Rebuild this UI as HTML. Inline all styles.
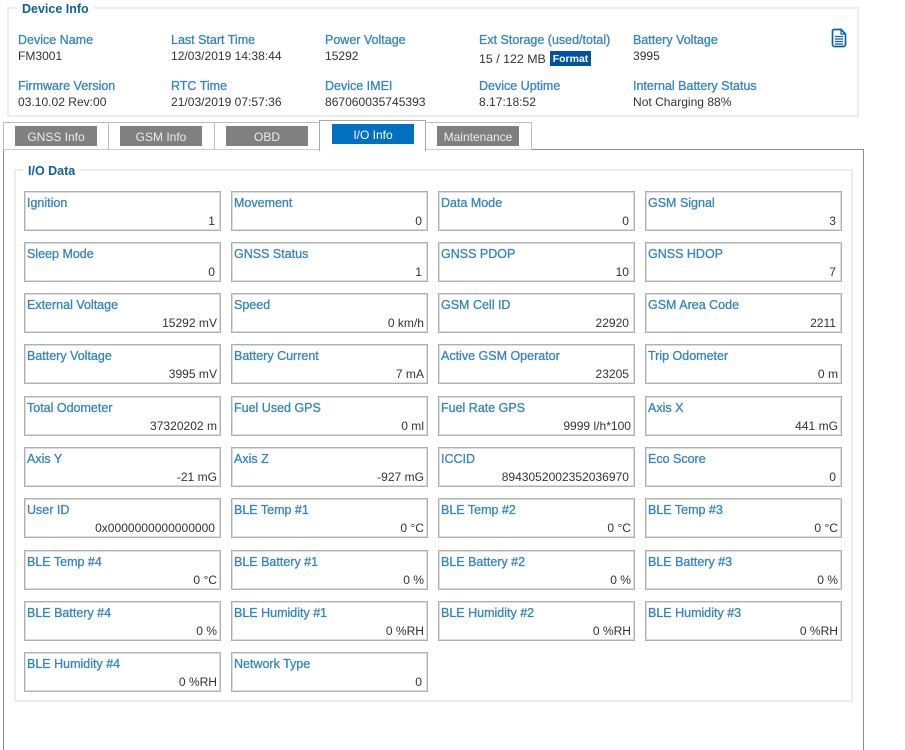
<!DOCTYPE html>
<html><head><meta charset="utf-8"><style>
html,body{margin:0;padding:0;background:#fff;width:905px;height:750px;overflow:hidden}
body{position:relative;font-family:"Liberation Sans",sans-serif;font-size:12.5px;color:#333}
#w{left:0;top:0;width:905px;height:750px;overflow:hidden;filter:blur(.3px)}
div,span{position:absolute;white-space:nowrap;box-sizing:border-box}
.l{color:#3585bf;line-height:16px;height:16px;-webkit-text-stroke:.3px #3585bf}
.v{color:#333;line-height:16px;height:16px;font-size:12.05px}
.fs{border:2px solid #ececec}
.lg{font-weight:bold;color:#10609f;background:#fff;line-height:16px;height:16px;padding:0 5px}
.tab{border:1px solid #bdbdbd;background:#fff}
.btn{background:#808080;color:#ececec;text-align:center;line-height:22px;height:20px;width:82px;top:126px;font-size:12px}
.b{border:1px solid #b0b0b0;width:197px;height:40px;margin:1px 0 0 1px;background:#fff;box-shadow:inset 1px 1px 0 #dcdcdc,inset -1px -1px 0 #dcdcdc}
.b .l{left:2px;top:3px}
.b .v{right:3px;top:21px}
.b .v.n{right:5px}
</style></head><body><div id="w">
<div class="fs" style="left:7px;top:7px;width:852px;height:110px"></div>
<div class="lg" style="left:17px;top:1px">Device Info</div>
<div class="l" style="left:18px;top:32px">Device Name</div><div class="v" style="left:18px;top:48px">FM3001</div>
<div class="l" style="left:171px;top:32px">Last Start Time</div><div class="v" style="left:171px;top:48px">12/03/2019 14:38:44</div>
<div class="l" style="left:325px;top:32px">Power Voltage</div><div class="v" style="left:325px;top:48px">15292</div>
<div class="l" style="left:479px;top:32px">Ext Storage (used/total)</div><div class="v" style="left:479px;top:51px;font-size:12.4px">15 / 122 MB</div>
<div style="left:550px;top:51px;width:41px;height:15px;background:#00539f;color:#fff;font-weight:bold;font-size:10.5px;line-height:16px;text-align:center">Format</div>
<div class="l" style="left:633px;top:32px">Battery Voltage</div><div class="v" style="left:633px;top:48px">3995</div>
<div class="l" style="left:18px;top:78px">Firmware Version</div><div class="v" style="left:18px;top:94px">03.10.02 Rev:00</div>
<div class="l" style="left:171px;top:78px">RTC Time</div><div class="v" style="left:171px;top:94px">21/03/2019 07:57:36</div>
<div class="l" style="left:325px;top:78px">Device IMEI</div><div class="v" style="left:325px;top:94px">867060035745393</div>
<div class="l" style="left:479px;top:78px">Device Uptime</div><div class="v" style="left:479px;top:94px">8.17:18:52</div>
<div class="l" style="left:633px;top:78px">Internal Battery Status</div><div class="v" style="left:633px;top:94px">Not Charging 88%</div>
<svg style="position:absolute;left:831px;top:28px" width="16" height="20" viewBox="0 0 16 20" fill="none" stroke="#0f62a5" stroke-width="1.7"><path d="M3 1.5H10L14.5 6V16.5a2 2 0 0 1-2 2H3.5a2 2 0 0 1-2-2V3a1.5 1.5 0 0 1 1.5-1.5Z"/><path d="M10 1.5V6H14.5" stroke-width="1.2"/><path d="M4 8.5H12M4 11H12M4 13.5H12M4 16H12" stroke-width="1.2"/></svg>

<div style="left:3px;top:149px;width:861px;height:610px;border:1px solid #8c8c8c"></div>
<div class="tab" style="left:3px;top:122px;width:106px;height:28px;border-bottom-color:#ccc"></div>
<div class="tab" style="left:108px;top:122px;width:107px;height:28px;border-bottom-color:#ccc"></div>
<div class="tab" style="left:214px;top:122px;width:107px;height:28px;border-bottom-color:#ccc"></div>
<div class="tab" style="left:425px;top:122px;width:107px;height:28px;border-bottom-color:#ccc"></div>
<div class="tab" style="left:319px;top:120px;width:107px;height:31px;border-color:#a8a8a8;border-bottom:0"></div>
<div class="btn" style="left:15px">GNSS Info</div>
<div class="btn" style="left:120px">GSM Info</div>
<div class="btn" style="left:226px">OBD</div>
<div class="btn" style="left:332px;top:124px;background:#0070c0;color:#fff">I/O Info</div>
<div class="btn" style="left:437px">Maintenance</div>

<div class="fs" style="left:14px;top:169px;width:839px;height:533px"></div>
<div class="lg" style="left:23px;top:163px">I/O Data</div>

<div class="b" style="left:23px;top:190px"><span class="l">Ignition</span><span class="v n">1</span></div>
<div class="b" style="left:230px;top:190px"><span class="l">Movement</span><span class="v n">0</span></div>
<div class="b" style="left:437px;top:190px"><span class="l">Data Mode</span><span class="v n">0</span></div>
<div class="b" style="left:644px;top:190px"><span class="l">GSM Signal</span><span class="v n">3</span></div>

<div class="b" style="left:23px;top:241px"><span class="l">Sleep Mode</span><span class="v n">0</span></div>
<div class="b" style="left:230px;top:241px"><span class="l">GNSS Status</span><span class="v n">1</span></div>
<div class="b" style="left:437px;top:241px"><span class="l">GNSS PDOP</span><span class="v n">10</span></div>
<div class="b" style="left:644px;top:241px"><span class="l">GNSS HDOP</span><span class="v n">7</span></div>

<div class="b" style="left:23px;top:292px"><span class="l">External Voltage</span><span class="v">15292 mV</span></div>
<div class="b" style="left:230px;top:292px"><span class="l">Speed</span><span class="v">0 km/h</span></div>
<div class="b" style="left:437px;top:292px"><span class="l">GSM Cell ID</span><span class="v n">22920</span></div>
<div class="b" style="left:644px;top:292px"><span class="l">GSM Area Code</span><span class="v n">2211</span></div>

<div class="b" style="left:23px;top:343px"><span class="l">Battery Voltage</span><span class="v">3995 mV</span></div>
<div class="b" style="left:230px;top:343px"><span class="l">Battery Current</span><span class="v">7 mA</span></div>
<div class="b" style="left:437px;top:343px"><span class="l">Active GSM Operator</span><span class="v n">23205</span></div>
<div class="b" style="left:644px;top:343px"><span class="l">Trip Odometer</span><span class="v">0 m</span></div>

<div class="b" style="left:23px;top:395px"><span class="l">Total Odometer</span><span class="v">37320202 m</span></div>
<div class="b" style="left:230px;top:395px"><span class="l">Fuel Used GPS</span><span class="v">0 ml</span></div>
<div class="b" style="left:437px;top:395px"><span class="l">Fuel Rate GPS</span><span class="v">9999 l/h*100</span></div>
<div class="b" style="left:644px;top:395px"><span class="l">Axis X</span><span class="v">441 mG</span></div>

<div class="b" style="left:23px;top:446px"><span class="l">Axis Y</span><span class="v">-21 mG</span></div>
<div class="b" style="left:230px;top:446px"><span class="l">Axis Z</span><span class="v">-927 mG</span></div>
<div class="b" style="left:437px;top:446px"><span class="l">ICCID</span><span class="v n">8943052002352036970</span></div>
<div class="b" style="left:644px;top:446px"><span class="l">Eco Score</span><span class="v n">0</span></div>

<div class="b" style="left:23px;top:497px"><span class="l">User ID</span><span class="v n">0x0000000000000000</span></div>
<div class="b" style="left:230px;top:497px"><span class="l">BLE Temp #1</span><span class="v">0 °C</span></div>
<div class="b" style="left:437px;top:497px"><span class="l">BLE Temp #2</span><span class="v">0 °C</span></div>
<div class="b" style="left:644px;top:497px"><span class="l">BLE Temp #3</span><span class="v">0 °C</span></div>

<div class="b" style="left:23px;top:549px"><span class="l">BLE Temp #4</span><span class="v">0 °C</span></div>
<div class="b" style="left:230px;top:549px"><span class="l">BLE Battery #1</span><span class="v">0 %</span></div>
<div class="b" style="left:437px;top:549px"><span class="l">BLE Battery #2</span><span class="v">0 %</span></div>
<div class="b" style="left:644px;top:549px"><span class="l">BLE Battery #3</span><span class="v">0 %</span></div>

<div class="b" style="left:23px;top:600px"><span class="l">BLE Battery #4</span><span class="v">0 %</span></div>
<div class="b" style="left:230px;top:600px"><span class="l">BLE Humidity #1</span><span class="v">0 %RH</span></div>
<div class="b" style="left:437px;top:600px"><span class="l">BLE Humidity #2</span><span class="v">0 %RH</span></div>
<div class="b" style="left:644px;top:600px"><span class="l">BLE Humidity #3</span><span class="v">0 %RH</span></div>

<div class="b" style="left:23px;top:651px"><span class="l">BLE Humidity #4</span><span class="v">0 %RH</span></div>
<div class="b" style="left:230px;top:651px"><span class="l">Network Type</span><span class="v n">0</span></div>
</div></body></html>
